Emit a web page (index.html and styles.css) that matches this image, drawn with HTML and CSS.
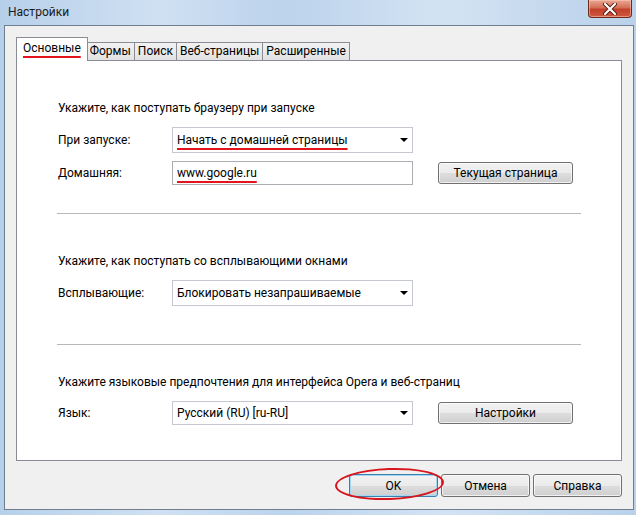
FILE: index.html
```html
<!DOCTYPE html>
<html lang="ru">
<head>
    <meta charset="UTF-8">
    <title>Настройки</title>
    <link rel="stylesheet" href="styles.css">
</head>
<body>
    <div class="window">
        <div class="titlebar">
            <span class="title">Настройки</span>
            <div class="close-btn">
                <svg width="16" height="12" viewBox="0 0 16 12">
                    <path d="M3 1 L13 11 M13 1 L3 11" stroke="#5a1a10" stroke-width="4" stroke-linecap="round"/>
                    <path d="M3 1 L13 11 M13 1 L3 11" stroke="#ffffff" stroke-width="2.2" stroke-linecap="round"/>
                </svg>
            </div>
        </div>

        <div class="client">
            <div class="tabs">
                <div class="tab active"><span class="mark">Основные</span></div>
                <div class="tab">Формы</div>
                <div class="tab">Поиск</div>
                <div class="tab">Веб-страницы</div>
                <div class="tab">Расширенные</div>
            </div>

            <div class="panel">
                <div class="section">
                    <div class="hint">Укажите, как поступать браузеру при запуске</div>
                    <div class="row">
                        <span class="label">При запуске:</span>
                        <div class="select"><span class="mark">Начать с домашней страницы</span></div>
                    </div>
                    <div class="row row-small">
                        <span class="label">Домашняя:</span>
                        <div class="input"><span class="mark">www.google.ru</span></div>
                        <div class="btn side-btn">Текущая страница</div>
                    </div>
                </div>

                <div class="sep"></div>

                <div class="section section-mid">
                    <div class="hint">Укажите, как поступать со всплывающими окнами</div>
                    <div class="row">
                        <span class="label">Всплывающие:</span>
                        <div class="select">Блокировать незапрашиваемые</div>
                    </div>
                </div>

                <div class="sep sep-second"></div>

                <div class="section section-last">
                    <div class="hint">Укажите языковые предпочтения для интерфейса Opera и веб-страниц</div>
                    <div class="row row-small">
                        <span class="label">Язык:</span>
                        <div class="select">Русский (RU) [ru-RU]</div>
                        <div class="btn side-btn">Настройки</div>
                    </div>
                </div>
            </div>

            <div class="dialog-buttons">
                <div class="btn btn-default">OK</div>
                <div class="btn">Отмена</div>
                <div class="btn">Справка</div>
            </div>
        </div>
    </div>
</body>
</html>
```

FILE: styles.css
```css
* {
    box-sizing: border-box;
}

body {
    margin: 0;
    padding: 0;
    font-family: Roboto, 'Noto Sans', sans-serif;
    font-size: 12px;
    color: #000;
    overflow: hidden;
}

.window {
    width: 636px;
    height: 515px;
    background: linear-gradient(to right, #b7d0ea 0%, #cfe0f2 25%, #bcd3ec 45%, #d3e3f3 70%, #b9d1ea 100%);
    display: flex;
    flex-direction: column;
}

.titlebar {
    height: 25px;
    position: relative;
    display: flex;
    align-items: center;
    padding-left: 8px;
}

.title {
    color: #1a1a1a;
    margin-top: -2px;
}

.close-btn {
    position: absolute;
    top: 0;
    left: 588px;
    width: 44px;
    height: 18px;
    border: 1px solid #6b2a1c;
    border-top: none;
    border-radius: 0 0 4px 4px;
    background: linear-gradient(#e9a895 0%, #d46f56 45%, #c2402a 55%, #cf5a3e 100%);
    box-shadow: inset 0 0 0 1px rgba(255, 210, 190, 0.5);
    display: flex;
    align-items: center;
    justify-content: center;
}

.client {
    margin: 0 2px 0 4px;
    height: 485px;
    background-color: #f0f0f0;
    border: 1px solid #6f7f90;
    padding: 11px 11px 0 11px;
}

/* tabs */

.tabs {
    display: flex;
    align-items: flex-end;
    height: 23px;
}

.tab {
    height: 18px;
    padding: 0 3px;
    border: 1px solid #898c95;
    border-bottom: none;
    background: linear-gradient(#f2f2f2, #e2e2e2);
    line-height: 16px;
    white-space: nowrap;
}

.tab + .tab {
    margin-left: -1px;
}

.tab.active {
    height: 24px;
    margin-bottom: -1px;
    padding: 0 6px;
    background: #fff;
    position: relative;
    z-index: 1;
    line-height: 20px;
    margin-right: -1px;
}

.mark {
    text-decoration: underline #e3141b;
    text-decoration-thickness: 2px;
    text-underline-offset: 4px;
}

/* panel */

.panel {
    height: 401px;
    background: #fff;
    border: 1px solid #898c95;
    padding: 39px 40px 0 41px;
}

.hint {
    line-height: 16px;
    margin-bottom: 11px;
    white-space: nowrap;
}

.row {
    display: flex;
    align-items: center;
    height: 26px;
}

.row + .row {
    margin-top: 8px;
}

.row-small {
    height: 24px;
}

.label {
    width: 114px;
    flex-shrink: 0;
}

.select,
.input {
    width: 241px;
    height: 100%;
    border: 1px solid #c5c8cf;
    background: #fff;
    padding: 0 4px;
    display: flex;
    align-items: center;
    position: relative;
}

.select::after {
    content: "";
    position: absolute;
    right: 4px;
    top: 50%;
    margin-top: -2px;
    border-left: 4px solid transparent;
    border-right: 4px solid transparent;
    border-top: 4px solid #000;
}

.input {
    border-color: #abadb3;
}

.sep {
    height: 2px;
    margin-top: 28px;
    margin-left: -1px;
    border-top: 1px solid #b8b8b8;
    border-bottom: 1px solid #fff;
}

.section-mid {
    margin-top: 38px;
}

.sep-second {
    margin-top: 38px;
}

.section-last {
    margin-top: 28px;
}

/* buttons */

.btn {
    height: 23px;
    border: 1px solid #707070;
    border-radius: 3px;
    background: linear-gradient(#f2f2f2 0%, #ebebeb 50%, #dddddd 51%, #cfcfcf 100%);
    box-shadow: inset 0 0 0 1px rgba(255, 255, 255, 0.7);
    display: flex;
    align-items: center;
    justify-content: center;
    white-space: nowrap;
}

.side-btn {
    width: 135px;
    height: 22px;
    margin-left: 25px;
}

.dialog-buttons {
    display: flex;
    justify-content: flex-end;
    gap: 3px;
    margin-top: 13px;
}

.dialog-buttons .btn {
    width: 89px;
}

.btn-default {
    border-color: #3c7fb1;
    box-shadow: inset 0 0 0 1px #a6d7f2;
    position: relative;
}

.btn-default::after {
    content: "";
    position: absolute;
    left: -15px;
    right: -7px;
    top: -7px;
    bottom: -4px;
    border: 2px solid #d8141c;
    border-radius: 50%;
    transform: rotate(-2deg);
}
```
